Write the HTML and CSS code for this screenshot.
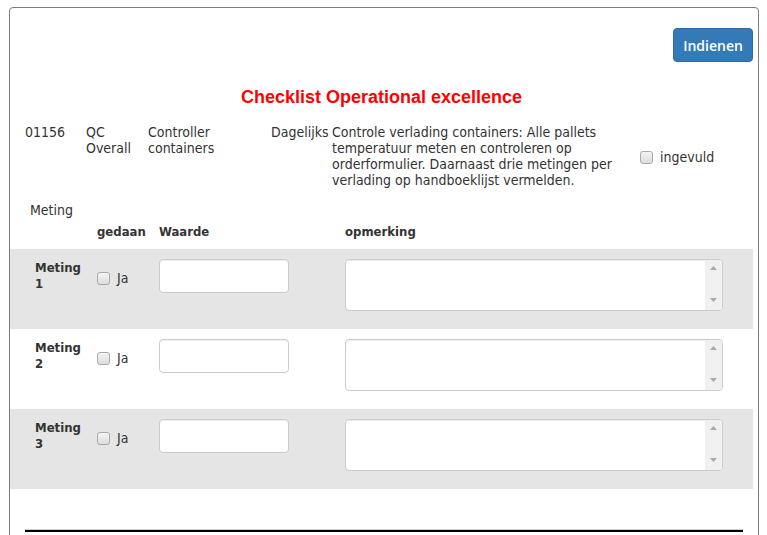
FILE: index.html
```html
<!DOCTYPE html>
<html>
<head>
<meta charset="utf-8">
<link rel="stylesheet" href="styles.css">
</head>
<body>
<div class="panel">
  <div class="toolbar"><button class="btn">Indienen</button></div>
  <h1 class="title">Checklist Operational excellence</h1>
  <div class="info">
    <div>01156</div>
    <div>QC<br>Overall</div>
    <div>Controller<br>containers</div>
    <div>Dagelijks</div>
    <div>Controle verlading containers: Alle pallets<br>temperatuur meten en controleren op<br>orderformulier. Daarnaast drie metingen per<br>verlading op handboeklijst vermelden.</div>
    <label class="done"><span class="cb"></span>ingevuld</label>
  </div>
  <div class="caption">Meting</div>
  <div class="grid head">
    <div></div>
    <div>gedaan</div>
    <div>Waarde</div>
    <div>opmerking</div>
  </div>
  <div class="grid row shade">
    <div class="lbl">Meting<br>1</div>
    <label class="ja"><span class="cb"></span>Ja</label>
    <div><input class="inp" type="text"></div>
    <div class="ta"><textarea></textarea><div class="sb"><svg width="7" height="4" viewBox="0 0 7 4"><path d="M0 4L3.5 0L7 4Z" fill="#a8a8a8"/></svg><svg width="7" height="4" viewBox="0 0 7 4"><path d="M0 0L3.5 4L7 0Z" fill="#a8a8a8"/></svg></div></div>
  </div>
  <div class="grid row">
    <div class="lbl">Meting<br>2</div>
    <label class="ja"><span class="cb"></span>Ja</label>
    <div><input class="inp" type="text"></div>
    <div class="ta"><textarea></textarea><div class="sb"><svg width="7" height="4" viewBox="0 0 7 4"><path d="M0 4L3.5 0L7 4Z" fill="#a8a8a8"/></svg><svg width="7" height="4" viewBox="0 0 7 4"><path d="M0 0L3.5 4L7 0Z" fill="#a8a8a8"/></svg></div></div>
  </div>
  <div class="grid row shade">
    <div class="lbl">Meting<br>3</div>
    <label class="ja"><span class="cb"></span>Ja</label>
    <div><input class="inp" type="text"></div>
    <div class="ta"><textarea></textarea><div class="sb"><svg width="7" height="4" viewBox="0 0 7 4"><path d="M0 4L3.5 0L7 4Z" fill="#a8a8a8"/></svg><svg width="7" height="4" viewBox="0 0 7 4"><path d="M0 0L3.5 4L7 0Z" fill="#a8a8a8"/></svg></div></div>
  </div>
  <div class="rule"></div>
</div>
</body>
</html>
```
FILE: styles.css
```css
html, body { margin: 0; padding: 0; background: #fff; }
body {
  font-family: "DejaVu Sans Condensed", "DejaVu Sans", sans-serif;
  font-size: 14px;
  line-height: 16px;
  color: #333;
}
.panel {
  margin: 7px 0 0 9px;
  width: 750px;
  height: 600px;
  box-sizing: border-box;
  border: 1px solid #7d7d7d;
  border-radius: 4px;
  padding: 20px 5px 0 0;
}
.toolbar { display: flex; justify-content: flex-end; }
.btn {
  width: 80px;
  height: 34px;
  background: #337ab7;
  border: 1px solid #2e6da4;
  border-radius: 4px;
  color: #fff;
  font-family: "Open Sans", "Noto Sans", sans-serif;
  font-size: 14px;
  font-weight: 600;
  padding: 0;
}
.title {
  margin: 25px 0 0 0;
  text-align: center;
  color: #f00;
  font-family: "Liberation Sans", Arial, sans-serif;
  font-size: 18px;
  line-height: 20px;
  font-weight: bold;
}
.info {
  margin-top: 17px;
  padding-left: 15px;
  display: grid;
  grid-template-columns: 61px 62px 123px 61px 308px auto;
  align-items: start;
}
.done {
  align-self: center;
  display: flex;
  align-items: center;
  gap: 7px;
  margin-top: 2px;
}
.cb {
  display: inline-block;
  width: 11px;
  height: 11px;
  border: 1px solid #a9a9a9;
  border-radius: 3px;
  background: linear-gradient(#f4f4f4, #dcdcdc);
}
.caption { margin-top: 14px; padding-left: 20px; }
.grid {
  display: grid;
  grid-template-columns: 62px 62px 186px 378px;
  padding-left: 25px;
}
.head { margin-top: 6px; font-weight: bold; font-size: 13px; margin-bottom: 9px; }
.row { height: 80px; box-sizing: border-box; padding-top: 10px; }
.shade { background: #e5e5e5; }
.lbl { font-weight: bold; font-size: 13px; padding-top: 1px; }
.ja {
  display: flex;
  align-items: center;
  gap: 7px;
  height: 32px;
  margin-top: 3px;
}
.inp {
  width: 130px;
  height: 34px;
  box-sizing: border-box;
  border: 1px solid #ccc;
  border-radius: 4px;
  background: #fff;
  box-shadow: inset 0 1px 1px rgba(0,0,0,.075);
  margin: 0;
}
.ta {
  display: flex;
  width: 378px;
  height: 52px;
  box-sizing: border-box;
  border: 1px solid #ccc;
  border-radius: 4px;
  background: #fff;
  box-shadow: inset 0 1px 1px rgba(0,0,0,.075);
  overflow: hidden;
}
.ta textarea {
  flex: 1;
  border: none;
  resize: none;
  background: transparent;
  outline: none;
  margin: 0;
}
.sb {
  width: 17px;
  background: #f0f0f0;
  display: flex;
  flex-direction: column;
  justify-content: space-between;
  align-items: center;
  padding: 6px 0 8px;
}
.sb svg { display: block; }
.rule {
  margin: 40px 10px 0 15px;
  border-top: 1px solid #d0d0d0;
  border-bottom: 2px solid #000;
}
```
